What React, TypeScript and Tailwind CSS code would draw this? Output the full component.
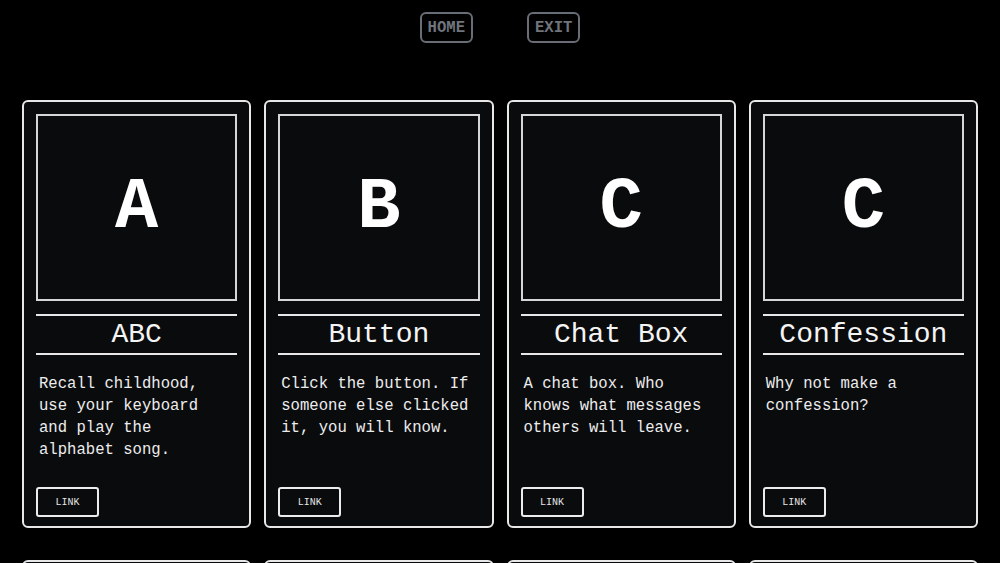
import React from "react";

type Project = {
  letter: string;
  title: string;
  blurb: string;
};

const projects: Project[] = [
  {
    letter: "A",
    title: "ABC",
    blurb: "Recall childhood, use your keyboard and play the alphabet song.",
  },
  {
    letter: "B",
    title: "Button",
    blurb: "Click the button. If someone else clicked it, you will know.",
  },
  {
    letter: "C",
    title: "Chat Box",
    blurb: "A chat box. Who knows what messages others will leave.",
  },
  {
    letter: "C",
    title: "Confession",
    blurb: "Why not make a confession?",
  },
  { letter: "D", title: "Drawing", blurb: "Draw something together with strangers." },
  { letter: "G", title: "Guestbook", blurb: "Sign the guestbook and say hello." },
  { letter: "M", title: "Maze", blurb: "Find your way out of the maze." },
  { letter: "P", title: "Piano", blurb: "Play a tune on the tiny piano." },
];

function NavButton({ label }: { label: string }) {
  return (
    <a
      href="#"
      className="flex h-[31px] items-center rounded-md border-2 border-[#686d76] px-[6px] pt-[2px] text-[15.6px] font-bold text-[#6f747d]"
    >
      {label}
    </a>
  );
}

function ProjectCard({ project }: { project: Project }) {
  return (
    <div className="flex h-[428px] flex-col rounded-md border-2 border-[#e8e8e8] bg-[#0a0b0d] px-3 pt-3 pb-[9px]">
      <div className="flex h-[187px] shrink-0 items-center justify-center border-2 border-[#d6d6d6]">
        <span className="text-[72px] leading-none font-bold text-white">{project.letter}</span>
      </div>

      <div className="mt-[13px] flex h-[41px] shrink-0 items-center justify-center border-y-2 border-[#e8e8e8]">
        <h2 className="text-[28px] leading-none text-[#f4f4f4]">{project.title}</h2>
      </div>

      <p className="mt-[18px] flex-1 px-[3px] text-[15.6px] leading-[22px] text-[#ededed]">
        {project.blurb}
      </p>

      <a
        href="#"
        className="flex h-[30px] w-[63px] shrink-0 items-center justify-center rounded-[3px] border-2 border-[#ececec] text-[10px] text-[#e6e6e6]"
      >
        LINK
      </a>
    </div>
  );
}

export default function App() {
  return (
    <div
      className="min-h-screen bg-black pb-10"
      style={{ fontFamily: '"Liberation Mono", "DejaVu Sans Mono", monospace' }}
    >
      <nav className="flex justify-center gap-[54px] pt-3">
        <NavButton label="HOME" />
        <NavButton label="EXIT" />
      </nav>

      <main className="mt-[57px] grid grid-cols-4 gap-x-[13px] gap-y-8 px-[22px]">
        {projects.map((p) => (
          <ProjectCard key={p.title} project={p} />
        ))}
      </main>
    </div>
  );
}
